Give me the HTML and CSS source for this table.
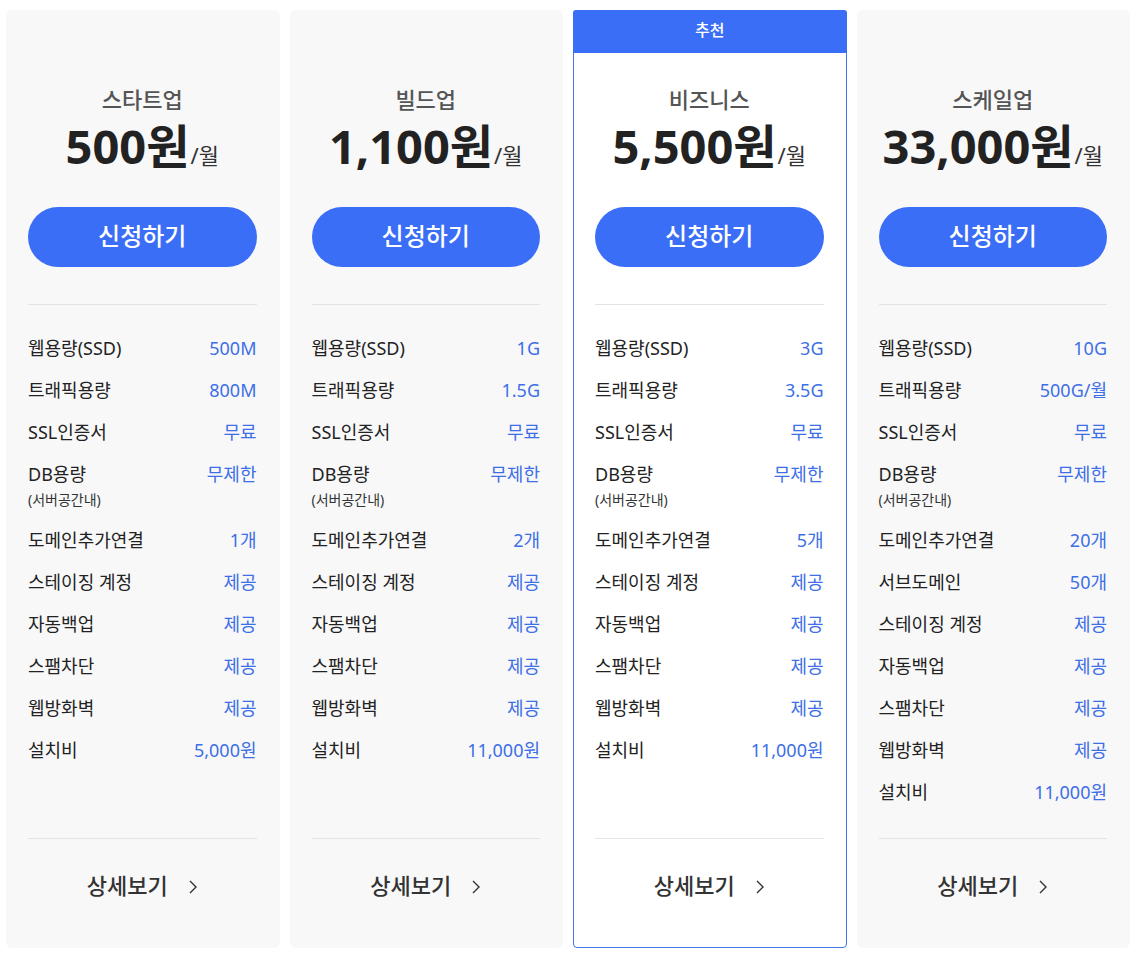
FILE: index.html
```html
<!DOCTYPE html>
<html lang="ko">
<head>
<meta charset="utf-8">
<title>요금제</title>
<link rel="stylesheet" href="styles.css">
</head>
<body>
<div class="plans">
  <section class="card">
    <div class="badge-slot"></div>
    <h2 class="name">스타트업</h2>
    <p class="price"><span class="amount">500원</span><span class="unit">/월</span></p>
    <a class="apply" href="#">신청하기</a>
    <ul class="features">
      <li><span class="label">웹용량(SSD)</span><span class="val">500M</span></li>
      <li><span class="label">트래픽용량</span><span class="val">800M</span></li>
      <li><span class="label">SSL인증서</span><span class="val">무료</span></li>
      <li><span class="label">DB용량<small>(서버공간내)</small></span><span class="val">무제한</span></li>
      <li><span class="label">도메인추가연결</span><span class="val">1개</span></li>
      <li><span class="label">스테이징 계정</span><span class="val">제공</span></li>
      <li><span class="label">자동백업</span><span class="val">제공</span></li>
      <li><span class="label">스팸차단</span><span class="val">제공</span></li>
      <li><span class="label">웹방화벽</span><span class="val">제공</span></li>
      <li><span class="label">설치비</span><span class="val">5,000원</span></li>
    </ul>
    <a class="more" href="#">상세보기<svg class="chev" width="10" height="16" viewBox="0 0 10 16"><polyline points="2,2 8,8 2,14" fill="none" stroke="#333" stroke-width="1.4"/></svg></a>
  </section>
  <section class="card">
    <div class="badge-slot"></div>
    <h2 class="name">빌드업</h2>
    <p class="price"><span class="amount">1,100원</span><span class="unit">/월</span></p>
    <a class="apply" href="#">신청하기</a>
    <ul class="features">
      <li><span class="label">웹용량(SSD)</span><span class="val">1G</span></li>
      <li><span class="label">트래픽용량</span><span class="val">1.5G</span></li>
      <li><span class="label">SSL인증서</span><span class="val">무료</span></li>
      <li><span class="label">DB용량<small>(서버공간내)</small></span><span class="val">무제한</span></li>
      <li><span class="label">도메인추가연결</span><span class="val">2개</span></li>
      <li><span class="label">스테이징 계정</span><span class="val">제공</span></li>
      <li><span class="label">자동백업</span><span class="val">제공</span></li>
      <li><span class="label">스팸차단</span><span class="val">제공</span></li>
      <li><span class="label">웹방화벽</span><span class="val">제공</span></li>
      <li><span class="label">설치비</span><span class="val">11,000원</span></li>
    </ul>
    <a class="more" href="#">상세보기<svg class="chev" width="10" height="16" viewBox="0 0 10 16"><polyline points="2,2 8,8 2,14" fill="none" stroke="#333" stroke-width="1.4"/></svg></a>
  </section>
  <section class="card featured">
    <div class="badge-slot">추천</div>
    <h2 class="name">비즈니스</h2>
    <p class="price"><span class="amount">5,500원</span><span class="unit">/월</span></p>
    <a class="apply" href="#">신청하기</a>
    <ul class="features">
      <li><span class="label">웹용량(SSD)</span><span class="val">3G</span></li>
      <li><span class="label">트래픽용량</span><span class="val">3.5G</span></li>
      <li><span class="label">SSL인증서</span><span class="val">무료</span></li>
      <li><span class="label">DB용량<small>(서버공간내)</small></span><span class="val">무제한</span></li>
      <li><span class="label">도메인추가연결</span><span class="val">5개</span></li>
      <li><span class="label">스테이징 계정</span><span class="val">제공</span></li>
      <li><span class="label">자동백업</span><span class="val">제공</span></li>
      <li><span class="label">스팸차단</span><span class="val">제공</span></li>
      <li><span class="label">웹방화벽</span><span class="val">제공</span></li>
      <li><span class="label">설치비</span><span class="val">11,000원</span></li>
    </ul>
    <a class="more" href="#">상세보기<svg class="chev" width="10" height="16" viewBox="0 0 10 16"><polyline points="2,2 8,8 2,14" fill="none" stroke="#333" stroke-width="1.4"/></svg></a>
  </section>
  <section class="card">
    <div class="badge-slot"></div>
    <h2 class="name">스케일업</h2>
    <p class="price"><span class="amount">33,000원</span><span class="unit">/월</span></p>
    <a class="apply" href="#">신청하기</a>
    <ul class="features">
      <li><span class="label">웹용량(SSD)</span><span class="val">10G</span></li>
      <li><span class="label">트래픽용량</span><span class="val">500G/월</span></li>
      <li><span class="label">SSL인증서</span><span class="val">무료</span></li>
      <li><span class="label">DB용량<small>(서버공간내)</small></span><span class="val">무제한</span></li>
      <li><span class="label">도메인추가연결</span><span class="val">20개</span></li>
      <li><span class="label">서브도메인</span><span class="val">50개</span></li>
      <li><span class="label">스테이징 계정</span><span class="val">제공</span></li>
      <li><span class="label">자동백업</span><span class="val">제공</span></li>
      <li><span class="label">스팸차단</span><span class="val">제공</span></li>
      <li><span class="label">웹방화벽</span><span class="val">제공</span></li>
      <li><span class="label">설치비</span><span class="val">11,000원</span></li>
    </ul>
    <a class="more" href="#">상세보기<svg class="chev" width="10" height="16" viewBox="0 0 10 16"><polyline points="2,2 8,8 2,14" fill="none" stroke="#333" stroke-width="1.4"/></svg></a>
  </section>
</div>
</body>
</html>
```
FILE: styles.css
```css
* { box-sizing: border-box; }
html, body { margin: 0; background: #fff; }
body {
  font-family: "Noto Sans", "Noto Sans CJK KR", sans-serif;
  color: #333;
}
.plans {
  display: grid;
  grid-template-columns: repeat(4, 1fr);
  column-gap: 10px;
  padding: 10px 13px 13px 6px;
}
.card {
  display: flex;
  flex-direction: column;
  background: #f8f8f9;
  border-radius: 6px;
  padding: 0 22px 0 21px;
  border: 1px solid transparent;
}
.card.featured {
  background: #fff;
  border-color: #4575ea;
  border-radius: 4px;
}
.badge-slot {
  height: 43px;
  margin: -1px -23px 0 -22px;
  line-height: 40px;
  text-align: center;
  font-size: 16px;
  font-weight: 500;
  color: #fff;
}
.featured .badge-slot {
  background: #3b6ef6;
  border-radius: 3px 3px 0 0;
}
.name {
  margin: 31px 0 0;
  font-size: 22px;
  font-weight: 500;
  line-height: 30px;
  text-align: center;
  color: #555;
}
.price {
  margin: 7px 0 0;
  text-align: center;
  line-height: 50px;
  height: 50px;
  color: #222;
  white-space: nowrap;
}
.amount {
  font-size: 47px;
  font-weight: 700;
}
.unit {
  font-size: 22px;
  color: #333;
  margin-left: 1px;
}
.apply {
  display: block;
  margin-top: 36px;
  height: 60px;
  line-height: 58px;
  border-radius: 30px;
  background: #3b6ef6;
  color: #fff;
  text-align: center;
  font-size: 24px;
  font-weight: 500;
  text-decoration: none;
}
.features {
  list-style: none;
  margin: 37px 0 0;
  padding: 22px 0 25px;
  border-top: 1px solid #e2e3e6;
  flex: 1;
}
.features li {
  display: flex;
  justify-content: space-between;
  align-items: flex-start;
  padding: 9px 0;
  font-size: 18px;
  line-height: 24px;
}
.label {
  display: flex;
  flex-direction: column;
  color: #222;
  font-weight: 400;
}
.label small {
  font-size: 14px;
  line-height: 20px;
  margin-top: 4px;
  font-weight: 400;
  color: #333;
}
.val {
  color: #3d6fe6;
}
.more {
  display: flex;
  justify-content: center;
  align-items: center;
  gap: 20px;
  border-top: 1px solid #e2e3e6;
  padding: 33px 0 49px;
  line-height: 26px;
  font-size: 22px;
  font-weight: 500;
  color: #333;
  text-decoration: none;
}
.chev { display: block; margin-top: 4px; }
```
